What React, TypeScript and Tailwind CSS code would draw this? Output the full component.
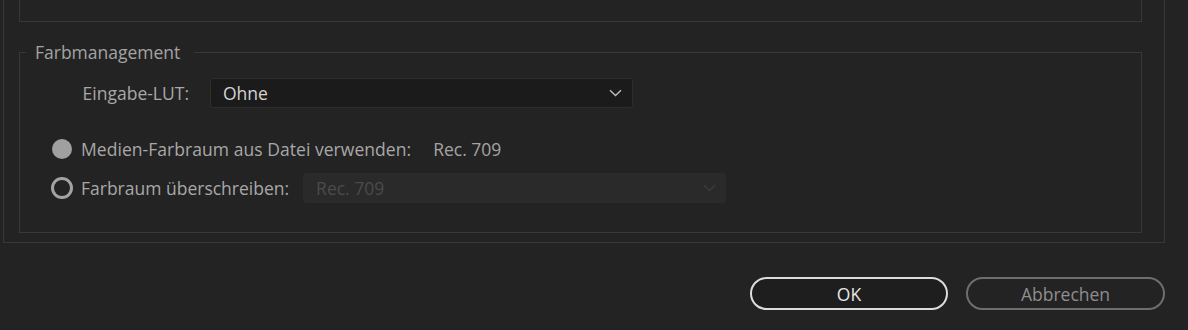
const font = { fontFamily: '"Open Sans", "Noto Sans", sans-serif' };

function Chevron({ color }: { color: string }) {
    return (
        <svg width="13" height="8" viewBox="0 0 13 8" fill="none">
            <path d="M1 1.2 L6.5 6.5 L12 1.2" stroke={color} strokeWidth="1.4" />
        </svg>
    );
}

function App() {
    return (
        <div
            className="w-[1188px] h-[330px] bg-[#232323] overflow-hidden text-[17.5px] leading-[20px] text-[#a8a8a8]"
            style={font}
        >
            {/* outer panel (top cut off) */}
            <div className="ml-[3px] w-[1162px] h-[243px] border border-t-0 border-[#383838] pl-[15px] pb-[9px]">
                {/* upper group, only its bottom is visible */}
                <div className="w-[1123px] h-[22px] border border-t-0 border-[#383838]" />

                {/* Farbmanagement */}
                <fieldset className="mt-[20px] w-[1123px] h-[191px] border border-[#383838]">
                    <legend className="ml-[6px] pl-[9px] pr-[14px] text-[#a3a3a3]">Farbmanagement</legend>

                    <div className="mt-[16px] flex items-center">
                        <span className="w-[169px] text-right">Eingabe-LUT:</span>
                        <div className="ml-[21px] w-[423px] h-[30px] rounded-[3px] bg-[#1b1b1b] border border-[#2d2d2d] flex items-center justify-between pl-[12px] pr-[10px]">
                            <span className="text-[#d4d4d4]">Ohne</span>
                            <Chevron color="#bdbdbd" />
                        </div>
                    </div>

                    <div className="mt-[31px] ml-[32px] flex items-center h-[20px]">
                        <span className="w-[20px] h-[20px] rounded-full bg-[#a0a0a0]" />
                        <span className="ml-[9px] tracking-[0.05px]">Medien-Farbraum aus Datei verwenden:</span>
                        <span className="ml-[22px] text-[#a3a3a3]">Rec. 709</span>
                    </div>

                    <div className="mt-[14px] ml-[31px] flex items-center">
                        <span className="w-[22px] h-[22px] rounded-full border-[3px] border-[#a3a3a3]" />
                        <span className="ml-[8px]">Farbraum überschreiben:</span>
                        <div className="ml-[14px] w-[423px] h-[30px] rounded-[3px] bg-[#2a2a2a] flex items-center justify-between pl-[13px] pr-[10px]">
                            <span className="text-[#4b4b4b]">Rec. 709</span>
                            <Chevron color="#3c3c3c" />
                        </div>
                    </div>
                </fieldset>
            </div>

            {/* buttons */}
            <div className="mt-[34px] ml-[750px] flex gap-[18px]">
                <button className="w-[198px] h-[33px] rounded-full border-2 border-[#dcdcdc] bg-[#1e1e1e] text-[#e6e6e6]">
                    OK
                </button>
                <button className="w-[199px] h-[33px] rounded-full border-2 border-[#6e6e6e] text-[#8e8e8e]">
                    Abbrechen
                </button>
            </div>
        </div>
    );
}

export default App;
